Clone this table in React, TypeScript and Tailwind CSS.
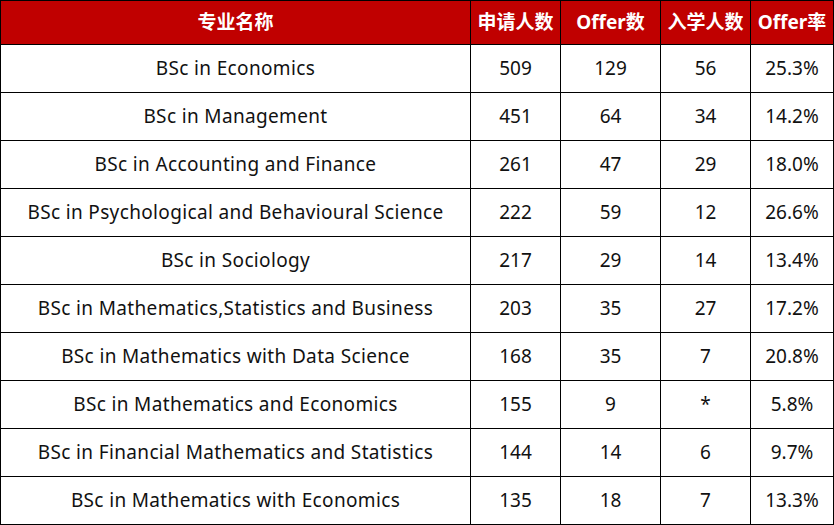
const rows: [string, string, string, string, string][] = [
  ['BSc in Economics', '509', '129', '56', '25.3%'],
  ['BSc in Management', '451', '64', '34', '14.2%'],
  ['BSc in Accounting and Finance', '261', '47', '29', '18.0%'],
  ['BSc in Psychological and Behavioural Science', '222', '59', '12', '26.6%'],
  ['BSc in Sociology', '217', '29', '14', '13.4%'],
  ['BSc in Mathematics,Statistics and Business', '203', '35', '27', '17.2%'],
  ['BSc in Mathematics with Data Science', '168', '35', '7', '20.8%'],
  ['BSc in Mathematics and Economics', '155', '9', '*', '5.8%'],
  ['BSc in Financial Mathematics and Statistics', '144', '14', '6', '9.7%'],
  ['BSc in Mathematics with Economics', '135', '18', '7', '13.3%'],
];

const headers = ['专业名称', '申请人数', 'Offer数', '入学人数', 'Offer率'];

export default function App() {
  return (
    <div
      className="w-[834px] h-[525px] bg-white"
      style={{ fontFamily: '"Noto Sans", "Noto Sans CJK SC", sans-serif' }}
    >
      <div className="grid grid-cols-[470px_90px_100px_90px_83px] border-l border-t border-black">
        {headers.map((h) => (
          <div
            key={h}
            className="h-[44px] flex items-center justify-center bg-[#c00000] text-white font-bold text-[19px] border-r border-b border-black"
          >
            {h}
          </div>
        ))}
        {rows.map((r) =>
          r.map((c, i) => (
            <div
              key={r[0] + i}
              className={
                i === 0
                  ? 'h-[48px] flex items-center justify-center text-[#111] text-[19px] tracking-[0.35px] border-r border-b border-black'
                  : 'h-[48px] flex items-center justify-center text-[#111] text-[19px] border-r border-b border-black'
              }
            >
              {c}
            </div>
          )),
        )}
      </div>
    </div>
  );
}
